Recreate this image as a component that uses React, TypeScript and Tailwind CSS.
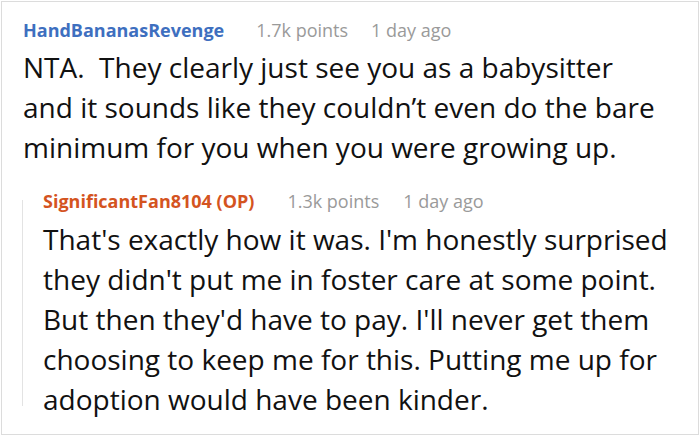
import React from "react";

export default function App() {
  return (
    <div className="w-[700px] h-[436px] bg-white p-px" style={{ fontFamily: '"Open Sans", "Noto Sans", sans-serif' }}>
      <div className="h-[434px] w-[698px] border border-[#dcdcdc] bg-white pl-[21px] pt-[16px] overflow-hidden">
        <div className="flex items-baseline text-[18px] leading-[24px]">
          <span className="font-bold text-[#3e6fbf]">HandBananasRevenge</span>
          <span className="ml-[32px] text-[#9a9a9a]">1.7k points</span>
          <span className="ml-[23px] text-[#9a9a9a]">1 day ago</span>
        </div>
        <p className="text-[28px] leading-[40px] text-[#111] mt-[5px] whitespace-pre-wrap">
          {"NTA.  They clearly just see you as a babysitter\nand it sounds like they couldn\u2019t even do the bare\nminimum for you when you were growing up."}
        </p>
        <div className="mt-[22px] -ml-px flex">
          <div className="w-px bg-[#e3e3e3] mt-[11px] mb-[13px]" />
          <div className="pl-[20px]">
            <div className="flex items-baseline text-[18px] leading-[24px]">
              <span className="font-bold text-[#d4541f]">SignificantFan8104 (OP)</span>
              <span className="ml-[33px] text-[#9a9a9a]">1.3k points</span>
              <span className="ml-[24px] text-[#9a9a9a]">1 day ago</span>
            </div>
            <p className="text-[28px] leading-[40px] text-[#111] mt-[6px] whitespace-pre-wrap">
              {"That's exactly how it was. I'm honestly surprised\nthey didn't put me in foster care at some point.\nBut then they'd have to pay. I'll never get them\nchoosing to keep me for this. Putting me up for\nadoption would have been kinder."}
            </p>
          </div>
        </div>
      </div>
    </div>
  );
}
